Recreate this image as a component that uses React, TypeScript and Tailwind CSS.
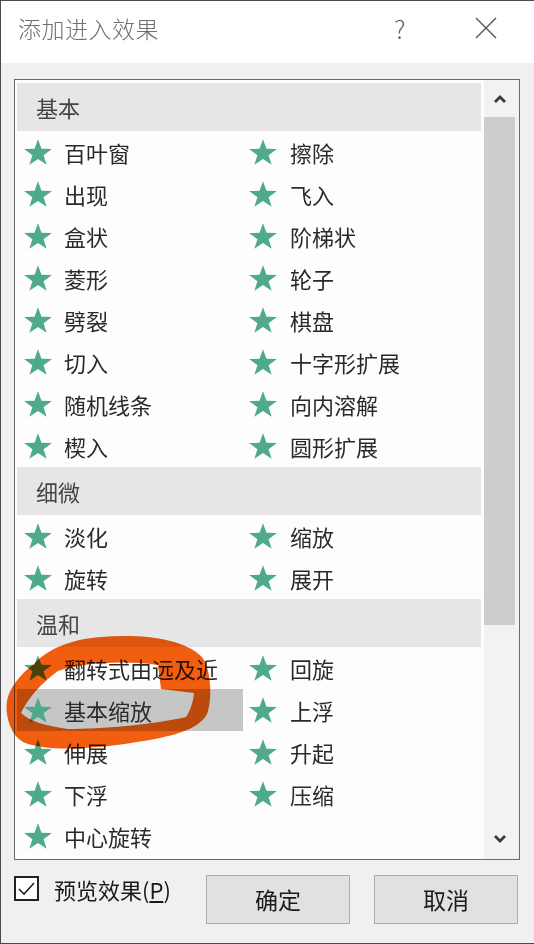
import React from "react";

const Star = () => (
  <svg width="28" height="26" viewBox="1.5 1.6 21 20.2" preserveAspectRatio="none" className="shrink-0">
    <polygon
      points="12,1.8 14.59,9.24 22.46,9.40 16.18,14.16 18.47,21.70 12,17.2 5.53,21.70 7.82,14.16 1.54,9.40 9.41,9.24"
      fill="#4fa98b"
    />
  </svg>
);

type Item = { l: string; r?: string; sel?: boolean };

const groups: { title: string; items: Item[] }[] = [
  {
    title: "基本",
    items: [
      { l: "百叶窗", r: "擦除" },
      { l: "出现", r: "飞入" },
      { l: "盒状", r: "阶梯状" },
      { l: "菱形", r: "轮子" },
      { l: "劈裂", r: "棋盘" },
      { l: "切入", r: "十字形扩展" },
      { l: "随机线条", r: "向内溶解" },
      { l: "楔入", r: "圆形扩展" },
    ],
  },
  {
    title: "细微",
    items: [
      { l: "淡化", r: "缩放" },
      { l: "旋转", r: "展开" },
    ],
  },
  {
    title: "温和",
    items: [
      { l: "翻转式由远及近", r: "回旋" },
      { l: "基本缩放", r: "上浮", sel: true },
      { l: "伸展", r: "升起" },
      { l: "下浮", r: "压缩" },
      { l: "中心旋转" },
    ],
  },
];

export default function App() {
  return (
    <div className="relative w-[534px] h-[944px] overflow-hidden border-t border-l border-b border-[#4a4a4a] bg-[#f0f0f0] flex flex-col font-['Noto_Sans_CJK_SC','Noto_Sans',sans-serif]">
      {/* Title bar */}
      <div className="h-[62px] shrink-0 bg-white flex items-center pl-[17px] pb-[8px]">
        <div className="text-[23px] font-light text-[#707070] leading-none tracking-[0.5px]">添加进入效果</div>
        <div className="ml-auto w-[30px] text-center text-[25px] font-light text-[#666] leading-none mr-[60px]">?</div>
        <svg width="22" height="22" viewBox="0 0 22 22" className="mr-[37px]">
          <path d="M1 1 L21 21 M21 1 L1 21" stroke="#555" strokeWidth="1.4" />
        </svg>
      </div>

      {/* Body */}
      <div className="flex-1 flex flex-col pl-[13px] pt-[16px]">
        <div className="w-[506px] h-[781px] border border-[#6a6a6a] bg-[#fdfdfd] flex">
          <div className="w-[469px] pl-[2px] pt-[3px] flex flex-col">
            {groups.map((g) => (
              <div key={g.title} className="flex flex-col">
                <div className="h-[48px] w-[464px] bg-[#e6e6e6] flex items-center pl-[19px] text-[22px] text-[#444]">
                  {g.title}
                </div>
                {g.items.map((it, i) => (
                  <div key={i} className="flex h-[42px] w-[464px]">
                    <div
                      className={`w-[226px] flex items-center pl-[7px] gap-[12px] text-[22px] text-[#2a2a2a] ${
                        it.sel ? "bg-[#c6c6c6]" : ""
                      }`}
                    >
                      <Star />
                      <span className="whitespace-nowrap">{it.l}</span>
                    </div>
                    {it.r && (
                      <div className="flex-1 flex items-center pl-[6px] gap-[13px] text-[22px] text-[#2a2a2a]">
                        <Star />
                        <span className="whitespace-nowrap">{it.r}</span>
                      </div>
                    )}
                  </div>
                ))}
              </div>
            ))}
          </div>
          {/* Scrollbar */}
          <div className="w-[35px] bg-[#f2f2f2] flex flex-col">
            <div className="w-[31px] h-[37px] flex items-center justify-center">
              <svg width="14" height="10" viewBox="0 0 14 10">
                <polyline points="2,8 7,3 12,8" fill="none" stroke="#3a3a3a" strokeWidth="2.8" />
              </svg>
            </div>
            <div className="w-[31px] h-[508px] bg-[#cdcdcd]" />
            <div className="flex-1" />
            <div className="w-[31px] h-[40px] flex items-center justify-center">
              <svg width="14" height="10" viewBox="0 0 14 10">
                <polyline points="2,2 7,7 12,2" fill="none" stroke="#3a3a3a" strokeWidth="2.8" />
              </svg>
            </div>
          </div>
        </div>

        {/* Bottom row */}
        <div className="flex items-start">
          <div className="w-[192px] mt-[16px] flex items-center">
            <div className="w-[25px] h-[25px] border-2 border-[#222] bg-white flex items-center justify-center">
              <svg width="19" height="19" viewBox="0 0 19 19">
                <polyline points="2,10 7,15 17,4" fill="none" stroke="#222" strokeWidth="1.6" />
              </svg>
            </div>
            <span className="ml-[15px] text-[22px] text-[#1a1a1a] leading-none whitespace-nowrap">
              预览效果(<span className="underline underline-offset-2">P</span>)
            </span>
          </div>
          <div className="mt-[15px] w-[144px] h-[49px] border border-[#adadad] bg-[#e1e1e1] flex items-center justify-center text-[23px] text-[#1a1a1a]">
            确定
          </div>
          <div className="mt-[15px] ml-[24px] w-[144px] h-[49px] border border-[#adadad] bg-[#e1e1e1] flex items-center justify-center text-[23px] text-[#1a1a1a]">
            取消
          </div>
        </div>
      </div>

      {/* Hand-drawn annotation */}
      <svg
        className="absolute left-0 top-0 pointer-events-none mix-blend-multiply"
        width="534"
        height="944"
        viewBox="0 0 534 944"
      >
        <path
          fillRule="evenodd"
          fill="#f45f10"
          d="M33 663 C 45 649, 70 638, 100 636 C 140 633, 182 637, 201 656 C 211 670, 211 700, 206 713 C 198 729, 170 736, 130 742 C 90 748, 45 751, 22 741 C 8 733, 4 712, 6 700 C 8 688, 18 674, 33 663 Z M57 670 C 80 662, 120 659, 157 664 L 160 688 L 193 692 C 192 702, 189 710, 185 716 C 150 724, 100 728, 67 728 C 45 725, 28 720, 20 712 C 25 702, 35 686, 57 670 Z"
        />
      </svg>
    </div>
  );
}
